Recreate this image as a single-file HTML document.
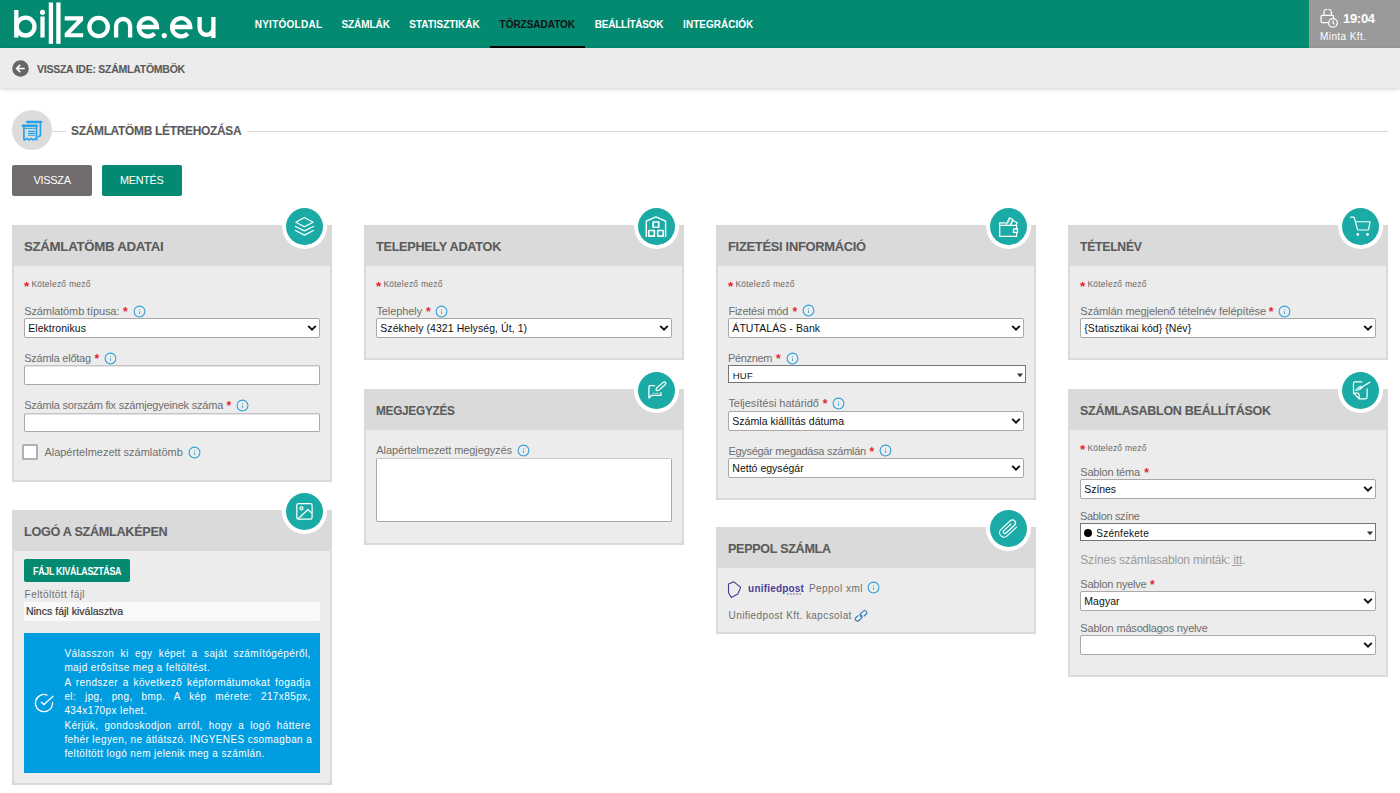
<!DOCTYPE html>
<html><head><meta charset="utf-8"><title>billzone</title>
<style>
html,body{margin:0;padding:0;width:1400px;height:793px;overflow:hidden;background:#fff;position:relative;}
body{font-family:"Liberation Sans",sans-serif;}
.t{position:absolute;white-space:nowrap;line-height:1;}
.r{position:absolute;display:block;}
</style></head><body>
<div class="r" style="left:0px;top:0px;width:1400px;height:48px;background:#058a72;"></div>
<div class="r" style="left:1309px;top:0px;width:91px;height:48px;background:#9a9a9a;"></div>
<svg class="r" style="left:0px;top:0px;" width="230" height="48" viewBox="0 0 230 48">
<g fill="none" stroke="#fff" stroke-width="4.3">
<line x1="16.3" y1="10" x2="16.3" y2="37.5"/>
<circle cx="25.6" cy="26.6" r="8.9"/>
<line x1="42.5" y1="16.5" x2="42.5" y2="37.5"/>
<line x1="50.9" y1="2.5" x2="50.9" y2="43.8"/>
<line x1="58.4" y1="2.5" x2="58.4" y2="43.8"/>
<path d="M64.7,16.3 H83.1 V20.4 L70.6,33.2 H83.1 V37.3 H64.7 V33.2 L77.2,20.4 H64.7 Z" fill="#fff" stroke="none"/>
<circle cx="98.6" cy="27" r="9.2"/>
<path d="M116.1,37.5 V26 a7,7 0 0 1 14,0 V37.5"/>
<path d="M139,27 H157 a9.1,9.1 0 1 0 -2.5,6.6"/>
<path d="M172.3,27 H190.3 a9.1,9.1 0 1 0 -2.5,6.6"/>
<path d="M199.6,17.1 V28 a6.9,6.9 0 0 0 13.8,0 V17.1 M213.4,28 V38.1"/>
</g>
<circle cx="42.5" cy="12.3" r="2.6" fill="#fff"/>
<circle cx="164.3" cy="35.6" r="2.6" fill="#fff"/>
</svg>
<div class="t" style="left:254.70px;top:20.00px;font-size:10px;color:#fff;font-weight:bold;letter-spacing:0.256px;">NYITÓOLDAL</div>
<div class="t" style="left:341.40px;top:20.00px;font-size:10px;color:#fff;font-weight:bold;letter-spacing:-0.047px;">SZÁMLÁK</div>
<div class="t" style="left:409.30px;top:20.00px;font-size:10px;color:#fff;font-weight:bold;letter-spacing:-0.030px;">STATISZTIKÁK</div>
<div class="t" style="left:499.60px;top:20.00px;font-size:10px;color:#111;font-weight:bold;letter-spacing:-0.034px;">TÖRZSADATOK</div>
<div class="t" style="left:594.70px;top:20.00px;font-size:10px;color:#fff;font-weight:bold;letter-spacing:-0.221px;">BEÁLLÍTÁSOK</div>
<div class="t" style="left:683.10px;top:20.00px;font-size:10px;color:#fff;font-weight:bold;letter-spacing:0.020px;">INTEGRÁCIÓK</div>
<div class="r" style="left:490px;top:46px;width:95px;height:2px;background:#000;"></div>
<svg class="r" style="left:1320px;top:9px;" width="20" height="20" viewBox="0 0 20 20"><g fill="none" stroke="#fff" stroke-width="1.25">
<path d="M3.9,6.4 V3.6 a3.75,3.75 0 0 1 7.5,0 V6.4"/>
<path d="M8.6,13.5 H2.3 a1.2,1.2 0 0 1 -1.2,-1.2 V7.6 a1.2,1.2 0 0 1 1.2,-1.2 H12.4 a1.2,1.2 0 0 1 1.2,1.2 V9.5"/>
<circle cx="13" cy="13.9" r="4.3"/>
<path d="M13,11.5 V14 L14.5,15.4"/>
</g></svg>
<div class="t" style="left:1343.00px;top:12.00px;font-size:13px;color:#fff;font-weight:bold;letter-spacing:-0.300px;">19:04</div>
<div class="t" style="left:1320.00px;top:32.00px;font-size:10px;color:#fff;letter-spacing:0.418px;">Minta Kft.</div>
<div class="r" style="left:0px;top:48px;width:1400px;height:40px;background:#ececec;box-shadow:0 1px 4px rgba(0,0,0,0.2);"></div>
<svg class="r" style="left:12px;top:60px;" width="17" height="17" viewBox="0 0 17 17"><circle cx="8.5" cy="8.5" r="8.3" fill="#666"/><path d="M12.8,8.5 H4.6 M8.2,4.9 L4.6,8.5 L8.2,12.1" fill="none" stroke="#fff" stroke-width="1.6"/></svg>
<div class="t" style="left:37.00px;top:64.00px;font-size:10.5px;color:#5a5a5a;font-weight:bold;letter-spacing:-0.252px;-webkit-text-stroke:0.1px #5a5a5a;">VISSZA IDE: SZÁMLATÖMBÖK</div>
<div class="r" style="left:52px;top:131px;width:14px;height:1px;background:#d9d9d9;"></div>
<div class="r" style="left:247px;top:131px;width:1141px;height:1px;background:#d9d9d9;"></div>
<div class="r" style="left:12px;top:110px;width:40px;height:40px;background:#dcdcdc;border-radius:50%;"></div>
<svg class="r" style="left:12px;top:110px;" width="40" height="40" viewBox="0 0 40 40"><g fill="none" stroke="#26a2e7" stroke-width="1.7" stroke-linecap="round">
<rect x="14" y="10.8" width="16.3" height="2.4" rx="1.2" fill="#26a2e7" stroke="none"/>
<path d="M28.4,13 V25.6 L26.3,26.8"/>
<rect x="9.6" y="14.4" width="16.4" height="2.7" rx="1.3" fill="#26a2e7" stroke="none"/>
<path d="M11.9,16.5 V29.2 q1.05,1.3 2.1,0 q1.05,-1.3 2.1,0 q1.05,1.3 2.1,0 q1.05,-1.3 2.1,0 q1.05,1.3 2.1,0 q1.05,-1.3 2.1,0 V16.5"/>
<path d="M13.5,18.4 H24" stroke-dasharray="1.2,1.3" stroke-width="1.1"/>
<path d="M16.4,21.4 H22.5 M16.4,23.4 H22.5 M16.4,25.2 H22.5" stroke-width="1.1"/>
</g></svg>
<div class="t" style="left:71.40px;top:125.00px;font-size:12.5px;color:#5a5a5a;font-weight:bold;letter-spacing:-0.300px;transform:scaleX(0.9537);transform-origin:0 0;-webkit-text-stroke:0.1px #5a5a5a;">SZÁMLATÖMB LÉTREHOZÁSA</div>
<div class="r" style="left:12px;top:165px;width:80px;height:31px;background:#716c70;border-radius:2px;"></div>
<div class="t" style="left:33.40px;top:175.00px;font-size:11px;color:#fff;letter-spacing:-0.285px;">VISSZA</div>
<div class="r" style="left:102px;top:165px;width:80px;height:31px;background:#058a72;border-radius:2px;"></div>
<div class="t" style="left:119.80px;top:175.00px;font-size:11px;color:#fff;letter-spacing:-0.300px;transform:scaleX(0.9833);transform-origin:0 0;">MENTÉS</div>
<div class="r" style="left:12px;top:225px;width:320px;height:257px;background:#dadada;"></div>
<div class="r" style="left:14px;top:266px;width:316px;height:214px;background:#ececec;"></div>
<div class="t" style="left:24.40px;top:240.00px;font-size:13.5px;color:#5a5a5a;font-weight:bold;letter-spacing:-0.300px;transform:scaleX(0.9816);transform-origin:0 0;-webkit-text-stroke:0.1px #5a5a5a;">SZÁMLATÖMB ADATAI</div>
<div class="r" style="left:281.5px;top:203.8px;width:45px;height:45px;background:#fff;border-radius:50%;"></div>
<div class="r" style="left:285.5px;top:207.8px;width:37px;height:37px;background:#1aaba7;border-radius:50%;"></div>
<svg class="r" style="left:285.5px;top:207.8px;" width="37" height="37" viewBox="0 0 37 37"><g fill="none" stroke="#fff" stroke-width="1.2" stroke-linejoin="round" stroke-linecap="round">
<path d="M18.45,9.5 L27.1,14.26 L18.45,18.68 L9.8,14.26 Z"/>
<path d="M9.5,18.5 L18.45,22.9 L27.4,18.5"/>
<path d="M9.5,22.56 L18.45,27.15 L27.4,22.56"/>
</g></svg>
<div class="t" style="left:23.90px;top:280.00px;font-size:13.5px;color:#e3262f;font-weight:bold;">*</div>
<div class="t" style="left:31.40px;top:280.00px;font-size:8.5px;color:#666;letter-spacing:0.231px;">Kötelező mező</div>
<div class="t" style="left:24.30px;top:306.00px;font-size:11px;color:#6e6e6e;letter-spacing:-0.130px;">Számlatömb típusa:</div>
<div class="t" style="left:122.90px;top:306.00px;font-size:12px;color:#e3262f;font-weight:bold;">*</div>
<svg class="r" style="left:132.5px;top:304.8px;" width="13" height="13" viewBox="0 0 13 13"><circle cx="6.5" cy="6.5" r="5.4" fill="none" stroke="#2a9fd8" stroke-width="1.05"/><rect x="6" y="6.3" width="1" height="2.7" fill="#2a9fd8" opacity="0.8"/><rect x="6" y="4.3" width="1" height="1" fill="#2a9fd8" opacity="0.8"/></svg>
<div class="r" style="left:24px;top:318px;width:296px;height:20px;background:#fff;border:1px solid #a9a9a9;border-radius:2px;box-sizing:border-box;"></div>
<div class="t" style="left:28.30px;top:323.00px;font-size:10.5px;color:#111;letter-spacing:0.037px;">Elektronikus</div>
<svg class="r" style="left:306.6px;top:324.1px;" width="10" height="8" viewBox="0 0 10 8"><path d="M1.2,1.9 L5,5.6 L8.8,1.9" fill="none" stroke="#111" stroke-width="2"/></svg>
<div class="t" style="left:24.20px;top:353.00px;font-size:11px;color:#6e6e6e;letter-spacing:-0.234px;">Számla előtag</div>
<div class="t" style="left:94.40px;top:353.00px;font-size:12px;color:#e3262f;font-weight:bold;">*</div>
<svg class="r" style="left:103.9px;top:351.7px;" width="13" height="13" viewBox="0 0 13 13"><circle cx="6.5" cy="6.5" r="5.4" fill="none" stroke="#2a9fd8" stroke-width="1.05"/><rect x="6" y="6.3" width="1" height="2.7" fill="#2a9fd8" opacity="0.8"/><rect x="6" y="4.3" width="1" height="1" fill="#2a9fd8" opacity="0.8"/></svg>
<div class="r" style="left:24px;top:365px;width:296px;height:20px;background:#fff;border:1px solid #a9a9a9;border-top-color:#c4c4c4;box-shadow:inset 0 1px 0 #e4e4e4;border-radius:2px;box-sizing:border-box;"></div>
<div class="t" style="left:24.20px;top:400.00px;font-size:11px;color:#6e6e6e;letter-spacing:-0.203px;">Számla sorszám fix számjegyeinek száma</div>
<div class="t" style="left:226.50px;top:400.00px;font-size:12px;color:#e3262f;font-weight:bold;">*</div>
<svg class="r" style="left:235.6px;top:399.2px;" width="13" height="13" viewBox="0 0 13 13"><circle cx="6.5" cy="6.5" r="5.4" fill="none" stroke="#2a9fd8" stroke-width="1.05"/><rect x="6" y="6.3" width="1" height="2.7" fill="#2a9fd8" opacity="0.8"/><rect x="6" y="4.3" width="1" height="1" fill="#2a9fd8" opacity="0.8"/></svg>
<div class="r" style="left:24px;top:413px;width:296px;height:19px;background:#fff;border:1px solid #a9a9a9;border-top-color:#c4c4c4;box-shadow:inset 0 1px 0 #e4e4e4;border-radius:2px;box-sizing:border-box;"></div>
<div class="r" style="left:22px;top:444px;width:16px;height:16px;background:#fff;border:2px solid #b0b0b0;border-radius:1.5px;box-sizing:border-box;"></div>
<div class="t" style="left:44.40px;top:447.00px;font-size:11px;color:#6e6e6e;letter-spacing:-0.017px;">Alapértelmezett számlatömb</div>
<svg class="r" style="left:187.8px;top:445.7px;" width="13" height="13" viewBox="0 0 13 13"><circle cx="6.5" cy="6.5" r="5.4" fill="none" stroke="#2a9fd8" stroke-width="1.05"/><rect x="6" y="6.3" width="1" height="2.7" fill="#2a9fd8" opacity="0.8"/><rect x="6" y="4.3" width="1" height="1" fill="#2a9fd8" opacity="0.8"/></svg>
<div class="r" style="left:12px;top:510px;width:320px;height:275px;background:#dadada;"></div>
<div class="r" style="left:14px;top:551px;width:316px;height:232px;background:#ececec;"></div>
<div class="t" style="left:24.40px;top:525.00px;font-size:13.5px;color:#5a5a5a;font-weight:bold;letter-spacing:-0.300px;transform:scaleX(0.9352);transform-origin:0 0;-webkit-text-stroke:0.1px #5a5a5a;">LOGÓ A SZÁMLAKÉPEN</div>
<div class="r" style="left:281.5px;top:488.8px;width:45px;height:45px;background:#fff;border-radius:50%;"></div>
<div class="r" style="left:285.5px;top:492.8px;width:37px;height:37px;background:#1aaba7;border-radius:50%;"></div>
<svg class="r" style="left:285.5px;top:492.8px;" width="37" height="37" viewBox="0 0 37 37"><g fill="none" stroke="#fff" stroke-width="1.2" stroke-linejoin="round">
<rect x="10.8" y="10.65" width="15.3" height="15.5" rx="1.6"/>
<circle cx="15.45" cy="15.3" r="1.5"/>
<path d="M12.1,25.75 L22,16.56 L26.04,20.44"/>
</g></svg>
<div class="r" style="left:24px;top:559px;width:106px;height:23px;background:#058a72;border-radius:2px;"></div>
<div class="t" style="left:33.20px;top:567.00px;font-size:10px;color:#fff;font-weight:bold;letter-spacing:-0.300px;transform:scaleX(0.8848);transform-origin:0 0;">FÁJL KIVÁLASZTÁSA</div>
<div class="t" style="left:24.60px;top:590.00px;font-size:10px;color:#6e6e6e;letter-spacing:0.435px;">Feltöltött fájl</div>
<div class="r" style="left:24px;top:602px;width:296px;height:19px;background:#f9f9f9;border-radius:2px;"></div>
<div class="t" style="left:25.90px;top:606.00px;font-size:10.5px;color:#383838;letter-spacing:0.021px;-webkit-text-stroke:0.2px #383838;">Nincs fájl kiválasztva</div>
<div class="r" style="left:24px;top:633px;width:296px;height:140px;background:#009de0;"></div>
<svg class="r" style="left:33px;top:692px;" width="22" height="22" viewBox="0 0 22 22"><g fill="none" stroke="#fff" stroke-width="1.3" stroke-linecap="round"><path d="M13.94,3.02 A8.6,8.6 0 1 0 19.57,10.35"/><path d="M8.3,10.3 L10.95,12.6 L20,4.3"/></g></svg>
<div class="t" style="left:64.4px;top:649px;width:246.3px;font-size:10px;color:#fff;text-align:justify;text-align-last:justify;letter-spacing:0.4px;">Válasszon ki egy képet a saját számítógépéről,</div>
<div class="t" style="left:64.40px;top:663.00px;font-size:10px;color:#fff;letter-spacing:0.4px;">majd erősítse meg a feltöltést.</div>
<div class="t" style="left:64.4px;top:678px;width:246.3px;font-size:10px;color:#fff;text-align:justify;text-align-last:justify;letter-spacing:0.4px;">A rendszer a következő képformátumokat fogadja</div>
<div class="t" style="left:64.4px;top:692px;width:246.3px;font-size:10px;color:#fff;text-align:justify;text-align-last:justify;letter-spacing:0.4px;">el: jpg, png, bmp. A kép mérete: 217x85px,</div>
<div class="t" style="left:64.40px;top:706.00px;font-size:10px;color:#fff;letter-spacing:0.4px;">434x170px lehet.</div>
<div class="t" style="left:64.4px;top:721px;width:246.3px;font-size:10px;color:#fff;text-align:justify;text-align-last:justify;letter-spacing:0.4px;">Kérjük, gondoskodjon arról, hogy a logó háttere</div>
<div class="t" style="left:64.4px;top:735px;width:246.3px;font-size:10px;color:#fff;text-align:justify;text-align-last:justify;letter-spacing:0.4px;">fehér legyen, ne átlátszó. INGYENES csomagban a</div>
<div class="t" style="left:64.40px;top:749.00px;font-size:10px;color:#fff;letter-spacing:0.4px;">feltöltött logó nem jelenik meg a számlán.</div>
<div class="r" style="left:364px;top:225px;width:320px;height:135px;background:#dadada;"></div>
<div class="r" style="left:366px;top:266px;width:316px;height:92px;background:#ececec;"></div>
<div class="t" style="left:376.40px;top:240.00px;font-size:13.5px;color:#5a5a5a;font-weight:bold;letter-spacing:-0.300px;transform:scaleX(0.9401);transform-origin:0 0;-webkit-text-stroke:0.1px #5a5a5a;">TELEPHELY ADATOK</div>
<div class="r" style="left:633.5px;top:203.8px;width:45px;height:45px;background:#fff;border-radius:50%;"></div>
<div class="r" style="left:637.5px;top:207.8px;width:37px;height:37px;background:#1aaba7;border-radius:50%;"></div>
<svg class="r" style="left:637.5px;top:207.8px;" width="37" height="37" viewBox="0 0 37 37"><g fill="none" stroke="#fff" stroke-linejoin="round" transform="translate(-0.6 0)">
<path d="M8.9,28.9 V13.2 L18.45,8.8 L28.2,13.2 V28.9" stroke-width="1.4"/>
<rect x="15.7" y="14" width="5.65" height="5.3" stroke-width="1.6"/>
<rect x="11.3" y="22.5" width="5.65" height="5.6" stroke-width="1.6"/>
<rect x="20.3" y="22.5" width="5.5" height="5.6" stroke-width="1.6"/>
</g></svg>
<div class="t" style="left:375.90px;top:280.00px;font-size:13.5px;color:#e3262f;font-weight:bold;">*</div>
<div class="t" style="left:383.40px;top:280.00px;font-size:8.5px;color:#666;letter-spacing:0.231px;">Kötelező mező</div>
<div class="t" style="left:376.40px;top:306.00px;font-size:11px;color:#6e6e6e;letter-spacing:-0.085px;">Telephely</div>
<div class="t" style="left:426.00px;top:306.00px;font-size:12px;color:#e3262f;font-weight:bold;">*</div>
<svg class="r" style="left:435.0px;top:304.8px;" width="13" height="13" viewBox="0 0 13 13"><circle cx="6.5" cy="6.5" r="5.4" fill="none" stroke="#2a9fd8" stroke-width="1.05"/><rect x="6" y="6.3" width="1" height="2.7" fill="#2a9fd8" opacity="0.8"/><rect x="6" y="4.3" width="1" height="1" fill="#2a9fd8" opacity="0.8"/></svg>
<div class="r" style="left:376px;top:318px;width:296px;height:20px;background:#fff;border:1px solid #a9a9a9;border-radius:2px;box-sizing:border-box;"></div>
<div class="t" style="left:380.30px;top:323.00px;font-size:10.5px;color:#111;letter-spacing:0.071px;">Székhely (4321 Helység, Út, 1)</div>
<svg class="r" style="left:658.6px;top:324.1px;" width="10" height="8" viewBox="0 0 10 8"><path d="M1.2,1.9 L5,5.6 L8.8,1.9" fill="none" stroke="#111" stroke-width="2"/></svg>
<div class="r" style="left:364px;top:389px;width:320px;height:156px;background:#dadada;"></div>
<div class="r" style="left:366px;top:430px;width:316px;height:113px;background:#ececec;"></div>
<div class="t" style="left:376.40px;top:404.00px;font-size:13.5px;color:#5a5a5a;font-weight:bold;letter-spacing:-0.300px;transform:scaleX(0.8735);transform-origin:0 0;-webkit-text-stroke:0.1px #5a5a5a;">MEGJEGYZÉS</div>
<div class="r" style="left:633.5px;top:367.8px;width:45px;height:45px;background:#fff;border-radius:50%;"></div>
<div class="r" style="left:637.5px;top:371.8px;width:37px;height:37px;background:#1aaba7;border-radius:50%;"></div>
<svg class="r" style="left:637.5px;top:371.8px;" width="37" height="37" viewBox="0 0 37 37"><g fill="none" stroke="#fff" stroke-width="1.3" stroke-linejoin="round">
<path d="M17,13.7 H12.3 a1.4,1.4 0 0 0 -1.4,1.4 V26.1 L13.4,23.4 H22.9 V20.3"/>
<path d="M18.1,18.5 L18.32,16.32 L25.42,10.17 A1.5,1.5 0 0 1 27.38,12.43 L20.28,18.58 Z" stroke-width="1.2"/>
<path d="M14.7,21.5 q1,-1 2,0 t2,0 t2,0" stroke-width="0.7"/>
</g></svg>
<div class="t" style="left:376.30px;top:445.00px;font-size:11px;color:#6e6e6e;letter-spacing:-0.099px;">Alapértelmezett megjegyzés</div>
<svg class="r" style="left:517.1px;top:443.8px;" width="13" height="13" viewBox="0 0 13 13"><circle cx="6.5" cy="6.5" r="5.4" fill="none" stroke="#2a9fd8" stroke-width="1.05"/><rect x="6" y="6.3" width="1" height="2.7" fill="#2a9fd8" opacity="0.8"/><rect x="6" y="4.3" width="1" height="1" fill="#2a9fd8" opacity="0.8"/></svg>
<div class="r" style="left:376px;top:458px;width:296px;height:64px;background:#fff;border:1px solid #a9a9a9;border-top-color:#c8c8c8;border-radius:2px;box-sizing:border-box;"></div>
<div class="r" style="left:716px;top:225px;width:320px;height:275px;background:#dadada;"></div>
<div class="r" style="left:718px;top:266px;width:316px;height:232px;background:#ececec;"></div>
<div class="t" style="left:728.40px;top:240.00px;font-size:13.5px;color:#5a5a5a;font-weight:bold;letter-spacing:-0.300px;transform:scaleX(0.9551);transform-origin:0 0;-webkit-text-stroke:0.1px #5a5a5a;">FIZETÉSI INFORMÁCIÓ</div>
<div class="r" style="left:985.5px;top:203.8px;width:45px;height:45px;background:#fff;border-radius:50%;"></div>
<div class="r" style="left:989.5px;top:207.8px;width:37px;height:37px;background:#1aaba7;border-radius:50%;"></div>
<svg class="r" style="left:989.5px;top:207.8px;" width="37" height="37" viewBox="0 0 37 37"><g fill="none" stroke="#fff" stroke-width="1.3" stroke-linejoin="round" transform="translate(-0.5 0)">
<path d="M16.6,14.9 H10.2 V28.3 H27.1 V17.3 H10.2"/>
<rect x="24" y="21" width="4" height="3.4" fill="#1aaba7"/>
<path d="M16.4,17.2 L19.9,9.7 L23.4,11.4 L20.6,17.2" stroke-width="1.1"/>
<path d="M20.8,17.2 L23.4,12.5 L27.8,14.7 L26.2,17.2" stroke-width="1.1"/>
<path d="M18.3,15.6 L20.9,10.8" stroke-width="0.7"/>
</g></svg>
<div class="t" style="left:727.90px;top:280.00px;font-size:13.5px;color:#e3262f;font-weight:bold;">*</div>
<div class="t" style="left:735.40px;top:280.00px;font-size:8.5px;color:#666;letter-spacing:0.231px;">Kötelező mező</div>
<div class="t" style="left:728.40px;top:306.00px;font-size:11px;color:#6e6e6e;letter-spacing:-0.223px;">Fizetési mód</div>
<div class="t" style="left:792.40px;top:306.00px;font-size:12px;color:#e3262f;font-weight:bold;">*</div>
<svg class="r" style="left:801.5px;top:304.4px;" width="13" height="13" viewBox="0 0 13 13"><circle cx="6.5" cy="6.5" r="5.4" fill="none" stroke="#2a9fd8" stroke-width="1.05"/><rect x="6" y="6.3" width="1" height="2.7" fill="#2a9fd8" opacity="0.8"/><rect x="6" y="4.3" width="1" height="1" fill="#2a9fd8" opacity="0.8"/></svg>
<div class="r" style="left:728px;top:318px;width:296px;height:20px;background:#fff;border:1px solid #a9a9a9;border-radius:2px;box-sizing:border-box;"></div>
<div class="t" style="left:732.30px;top:323.00px;font-size:10.5px;color:#111;letter-spacing:0.075px;">ÁTUTALÁS - Bank</div>
<svg class="r" style="left:1010.6px;top:324.1px;" width="10" height="8" viewBox="0 0 10 8"><path d="M1.2,1.9 L5,5.6 L8.8,1.9" fill="none" stroke="#111" stroke-width="2"/></svg>
<div class="t" style="left:728.40px;top:353.00px;font-size:11px;color:#6e6e6e;letter-spacing:-0.300px;transform:scaleX(0.9939);transform-origin:0 0;">Pénznem</div>
<div class="t" style="left:776.00px;top:353.00px;font-size:12px;color:#e3262f;font-weight:bold;">*</div>
<svg class="r" style="left:786.3px;top:351.5px;" width="13" height="13" viewBox="0 0 13 13"><circle cx="6.5" cy="6.5" r="5.4" fill="none" stroke="#2a9fd8" stroke-width="1.05"/><rect x="6" y="6.3" width="1" height="2.7" fill="#2a9fd8" opacity="0.8"/><rect x="6" y="4.3" width="1" height="1" fill="#2a9fd8" opacity="0.8"/></svg>
<div class="r" style="left:728px;top:365px;width:298px;height:18px;background:#fff;border:1px solid #767676;box-sizing:border-box;"></div>
<svg class="r" style="left:1016.6px;top:372.8px;" width="6" height="5" viewBox="0 0 6 5"><path d="M0,0.5 H6 L3,4.3 Z" fill="#333"/></svg>
<div class="t" style="left:732.80px;top:371.00px;font-size:9.5px;color:#111;letter-spacing:0.188px;">HUF</div>
<div class="t" style="left:728.40px;top:398.00px;font-size:11px;color:#6e6e6e;letter-spacing:-0.032px;">Teljesítési határidő</div>
<div class="t" style="left:822.80px;top:398.00px;font-size:12px;color:#e3262f;font-weight:bold;">*</div>
<svg class="r" style="left:831.7px;top:397.0px;" width="13" height="13" viewBox="0 0 13 13"><circle cx="6.5" cy="6.5" r="5.4" fill="none" stroke="#2a9fd8" stroke-width="1.05"/><rect x="6" y="6.3" width="1" height="2.7" fill="#2a9fd8" opacity="0.8"/><rect x="6" y="4.3" width="1" height="1" fill="#2a9fd8" opacity="0.8"/></svg>
<div class="r" style="left:728px;top:411px;width:296px;height:20px;background:#fff;border:1px solid #a9a9a9;border-radius:2px;box-sizing:border-box;"></div>
<div class="t" style="left:732.30px;top:416.00px;font-size:10.5px;color:#111;letter-spacing:0.037px;">Számla kiállítás dátuma</div>
<svg class="r" style="left:1010.6px;top:417.1px;" width="10" height="8" viewBox="0 0 10 8"><path d="M1.2,1.9 L5,5.6 L8.8,1.9" fill="none" stroke="#111" stroke-width="2"/></svg>
<div class="t" style="left:728.40px;top:446.00px;font-size:11px;color:#6e6e6e;letter-spacing:-0.300px;">Egységár megadása számlán</div>
<div class="t" style="left:869.60px;top:446.00px;font-size:12px;color:#e3262f;font-weight:bold;">*</div>
<svg class="r" style="left:879.2px;top:444.4px;" width="13" height="13" viewBox="0 0 13 13"><circle cx="6.5" cy="6.5" r="5.4" fill="none" stroke="#2a9fd8" stroke-width="1.05"/><rect x="6" y="6.3" width="1" height="2.7" fill="#2a9fd8" opacity="0.8"/><rect x="6" y="4.3" width="1" height="1" fill="#2a9fd8" opacity="0.8"/></svg>
<div class="r" style="left:728px;top:458px;width:296px;height:20px;background:#fff;border:1px solid #a9a9a9;border-radius:2px;box-sizing:border-box;"></div>
<div class="t" style="left:732.30px;top:463.00px;font-size:10.5px;color:#111;letter-spacing:0.015px;">Nettó egységár</div>
<svg class="r" style="left:1010.6px;top:464.1px;" width="10" height="8" viewBox="0 0 10 8"><path d="M1.2,1.9 L5,5.6 L8.8,1.9" fill="none" stroke="#111" stroke-width="2"/></svg>
<div class="r" style="left:716px;top:527px;width:320px;height:107px;background:#dadada;"></div>
<div class="r" style="left:718px;top:568px;width:316px;height:64px;background:#ececec;"></div>
<div class="t" style="left:728.40px;top:542.00px;font-size:13.5px;color:#5a5a5a;font-weight:bold;letter-spacing:-0.300px;transform:scaleX(0.9286);transform-origin:0 0;-webkit-text-stroke:0.1px #5a5a5a;">PEPPOL SZÁMLA</div>
<div class="r" style="left:985.5px;top:505.79999999999995px;width:45px;height:45px;background:#fff;border-radius:50%;"></div>
<div class="r" style="left:989.5px;top:509.79999999999995px;width:37px;height:37px;background:#1aaba7;border-radius:50%;"></div>
<svg class="r" style="left:989.5px;top:509.79999999999995px;" width="37" height="37" viewBox="0 0 37 37"><g transform="translate(18.1 18.9) rotate(-43) scale(1.17) translate(-18.3 -18.6)" fill="none" stroke="#fff" stroke-width="1.0" stroke-linecap="round" stroke-linejoin="round">
<path d="M24.6,22.4 H13.6 a3.8,3.8 0 0 1 0,-7.6 H24.4 a2.6,2.6 0 0 1 0,5.2 H14.6 a1.4,1.4 0 0 1 0,-2.8 H23"/>
</g></svg>
<svg class="r" style="left:727px;top:580px;" width="16" height="19" viewBox="0 0 16 19"><path d="M1.5,4.1 L6.9,1.8 L13.7,7.4 L10.8,14 L4.2,17.4 L1.5,12.5 Z" fill="none" stroke="#463a90" stroke-width="1.1" stroke-linejoin="round"/></svg>
<div class="t" style="left:748.10px;top:584.00px;font-size:10px;color:#4b3f95;font-weight:bold;letter-spacing:0.192px;">unifiedpost</div>
<svg class="r" style="left:786px;top:593px;" width="17" height="2" viewBox="0 0 17 2"><path d="M1,1 H16" stroke="#4b3f95" stroke-width="1" stroke-dasharray="1.5,1.6"/></svg>
<div class="t" style="left:808.90px;top:584.00px;font-size:10px;color:#6e6e6e;letter-spacing:0.448px;">Peppol xml</div>
<svg class="r" style="left:866.9px;top:581.4px;" width="13" height="13" viewBox="0 0 13 13"><circle cx="6.5" cy="6.5" r="5.4" fill="none" stroke="#2a9fd8" stroke-width="1.05"/><rect x="6" y="6.3" width="1" height="2.7" fill="#2a9fd8" opacity="0.8"/><rect x="6" y="4.3" width="1" height="1" fill="#2a9fd8" opacity="0.8"/></svg>
<div class="t" style="left:728.60px;top:611.00px;font-size:10px;color:#6e6e6e;letter-spacing:0.398px;">Unifiedpost Kft. kapcsolat</div>
<svg class="r" style="left:854px;top:609px;" width="14" height="14" viewBox="0 0 14 14"><g fill="none" stroke="#2f80b9" stroke-width="1.15" stroke-linecap="round"><path transform="translate(4.7 8.9) rotate(-42)" d="M0.9,-2.1 H-1.6 A2.1,2.1 0 0 0 -1.6,2.1 H1.6 A2.1,2.1 0 0 0 3.5,-1"/><path transform="translate(9.4 4.8) rotate(-42)" d="M-0.9,2.1 H1.6 A2.1,2.1 0 0 0 1.6,-2.1 H-1.6 A2.1,2.1 0 0 0 -3.5,1"/></g></svg>
<div class="r" style="left:1068px;top:225px;width:320px;height:135px;background:#dadada;"></div>
<div class="r" style="left:1070px;top:266px;width:316px;height:92px;background:#ececec;"></div>
<div class="t" style="left:1080.40px;top:240.00px;font-size:13.5px;color:#5a5a5a;font-weight:bold;letter-spacing:-0.300px;transform:scaleX(0.9049);transform-origin:0 0;-webkit-text-stroke:0.1px #5a5a5a;">TÉTELNÉV</div>
<div class="r" style="left:1337.5px;top:203.8px;width:45px;height:45px;background:#fff;border-radius:50%;"></div>
<div class="r" style="left:1341.5px;top:207.8px;width:37px;height:37px;background:#1aaba7;border-radius:50%;"></div>
<svg class="r" style="left:1341.5px;top:207.8px;" width="37" height="37" viewBox="0 0 37 37"><g fill="none" stroke="#fff" stroke-width="1.2" stroke-linejoin="round" stroke-linecap="round">
<path d="M8.7,9.14 H11.6 a0.6,0.6 0 0 1 0.6,0.5 L13.4,13.73 H28.1 L26.6,21.4 a0.8,0.8 0 0 1 -0.8,0.6 H16.3 a0.8,0.8 0 0 1 -0.8,-0.6 L13.4,13.73"/>
</g>
<circle cx="15.8" cy="26.45" r="1.35" fill="#fff"/><circle cx="25.5" cy="26.45" r="1.35" fill="#fff"/></svg>
<div class="t" style="left:1079.90px;top:280.00px;font-size:13.5px;color:#e3262f;font-weight:bold;">*</div>
<div class="t" style="left:1087.40px;top:280.00px;font-size:8.5px;color:#666;letter-spacing:0.231px;">Kötelező mező</div>
<div class="t" style="left:1080.30px;top:306.00px;font-size:11px;color:#6e6e6e;letter-spacing:-0.090px;">Számlán megjelenő tételnév felépítése</div>
<div class="t" style="left:1268.80px;top:306.00px;font-size:12px;color:#e3262f;font-weight:bold;">*</div>
<svg class="r" style="left:1278.3px;top:304.5px;" width="13" height="13" viewBox="0 0 13 13"><circle cx="6.5" cy="6.5" r="5.4" fill="none" stroke="#2a9fd8" stroke-width="1.05"/><rect x="6" y="6.3" width="1" height="2.7" fill="#2a9fd8" opacity="0.8"/><rect x="6" y="4.3" width="1" height="1" fill="#2a9fd8" opacity="0.8"/></svg>
<div class="r" style="left:1080px;top:318px;width:296px;height:20px;background:#fff;border:1px solid #a9a9a9;border-radius:2px;box-sizing:border-box;"></div>
<div class="t" style="left:1084.30px;top:323.00px;font-size:10.5px;color:#111;letter-spacing:0.054px;">{Statisztikai kód} {Név}</div>
<svg class="r" style="left:1362.6px;top:324.1px;" width="10" height="8" viewBox="0 0 10 8"><path d="M1.2,1.9 L5,5.6 L8.8,1.9" fill="none" stroke="#111" stroke-width="2"/></svg>
<div class="r" style="left:1068px;top:389px;width:320px;height:288px;background:#dadada;"></div>
<div class="r" style="left:1070px;top:430px;width:316px;height:245px;background:#ececec;"></div>
<div class="t" style="left:1080.40px;top:404.00px;font-size:13.5px;color:#5a5a5a;font-weight:bold;letter-spacing:-0.300px;transform:scaleX(0.9268);transform-origin:0 0;-webkit-text-stroke:0.1px #5a5a5a;">SZÁMLASABLON BEÁLLÍTÁSOK</div>
<div class="r" style="left:1337.5px;top:367.8px;width:45px;height:45px;background:#fff;border-radius:50%;"></div>
<div class="r" style="left:1341.5px;top:371.8px;width:37px;height:37px;background:#1aaba7;border-radius:50%;"></div>
<svg class="r" style="left:1341.5px;top:371.8px;" width="37" height="37" viewBox="0 0 37 37"><g fill="none" stroke="#fff" stroke-width="1.2" stroke-linejoin="round" stroke-linecap="round">
<path d="M19.9,9.85 H13 a1.5,1.5 0 0 0 -1.5,1.5 V21.15 L17.2,26.8 H23.6 a1.5,1.5 0 0 0 1.5,-1.5 V16.9"/>
<path d="M11.6,21.2 H15.6 a1.5,1.5 0 0 1 1.5,1.5 V26.6"/>
<path d="M27.8,10.3 L19.6,15.2" stroke-width="1.3"/>
<path d="M13.4,18.5 Q15.2,15.4 18.4,14.1 L20.4,15.7 Q18.6,18.3 13.4,18.5 Z" fill="#fff" stroke-width="0.5"/><path d="M15.6,17.3 L17.8,15.9" stroke="#1aaba7" stroke-width="0.7"/>
</g></svg>
<div class="t" style="left:1079.90px;top:443.00px;font-size:13.5px;color:#e3262f;font-weight:bold;">*</div>
<div class="t" style="left:1087.40px;top:444.00px;font-size:8.5px;color:#666;letter-spacing:0.231px;">Kötelező mező</div>
<div class="t" style="left:1080.30px;top:467.00px;font-size:11px;color:#6e6e6e;letter-spacing:-0.196px;">Sablon téma</div>
<div class="t" style="left:1144.20px;top:467.00px;font-size:12px;color:#e3262f;font-weight:bold;">*</div>
<div class="r" style="left:1080px;top:479px;width:296px;height:19.5px;background:#fff;border:1px solid #a9a9a9;border-radius:2px;box-sizing:border-box;"></div>
<div class="t" style="left:1084.30px;top:484.00px;font-size:10.5px;color:#111;letter-spacing:-0.080px;">Színes</div>
<svg class="r" style="left:1362.6px;top:485.1px;" width="10" height="8" viewBox="0 0 10 8"><path d="M1.2,1.9 L5,5.6 L8.8,1.9" fill="none" stroke="#111" stroke-width="2"/></svg>
<div class="t" style="left:1080.30px;top:511.00px;font-size:11px;color:#6e6e6e;letter-spacing:-0.300px;transform:scaleX(0.9917);transform-origin:0 0;">Sablon színe</div>
<div class="r" style="left:1080px;top:523px;width:296px;height:18px;background:#fff;border:1px solid #767676;box-sizing:border-box;"></div>
<svg class="r" style="left:1366.6px;top:530.8px;" width="6" height="5" viewBox="0 0 6 5"><path d="M0,0.5 H6 L3,4.3 Z" fill="#333"/></svg>
<div class="r" style="left:1083.9px;top:529.2px;width:8.2px;height:8.2px;background:#000;border-radius:50%;"></div>
<div class="t" style="left:1096.20px;top:529.00px;font-size:10px;color:#111;letter-spacing:0.274px;">Szénfekete</div>
<div class="t" style="left:1080.30px;top:554.00px;font-size:12px;color:#9b9b9b;letter-spacing:-0.203px;">Színes számlasablon minták: itt.</div>
<div class="r" style="left:1232px;top:565px;width:10px;height:1px;background:#a5a5a5;"></div>
<div class="t" style="left:1080.30px;top:579.00px;font-size:11px;color:#6e6e6e;letter-spacing:-0.226px;">Sablon nyelve</div>
<div class="t" style="left:1150.00px;top:579.00px;font-size:12px;color:#e3262f;font-weight:bold;">*</div>
<div class="r" style="left:1080px;top:591px;width:296px;height:19.5px;background:#fff;border:1px solid #a9a9a9;border-radius:2px;box-sizing:border-box;"></div>
<div class="t" style="left:1084.30px;top:596.00px;font-size:10.5px;color:#111;letter-spacing:0.057px;">Magyar</div>
<svg class="r" style="left:1362.6px;top:597.1px;" width="10" height="8" viewBox="0 0 10 8"><path d="M1.2,1.9 L5,5.6 L8.8,1.9" fill="none" stroke="#111" stroke-width="2"/></svg>
<div class="t" style="left:1080.30px;top:623.00px;font-size:11px;color:#6e6e6e;letter-spacing:-0.173px;">Sablon másodlagos nyelve</div>
<div class="r" style="left:1080px;top:635px;width:296px;height:19.5px;background:#fff;border:1px solid #a9a9a9;border-radius:2px;box-sizing:border-box;"></div>
<svg class="r" style="left:1362.6px;top:641.1px;" width="10" height="8" viewBox="0 0 10 8"><path d="M1.2,1.9 L5,5.6 L8.8,1.9" fill="none" stroke="#111" stroke-width="2"/></svg>
</body></html>
